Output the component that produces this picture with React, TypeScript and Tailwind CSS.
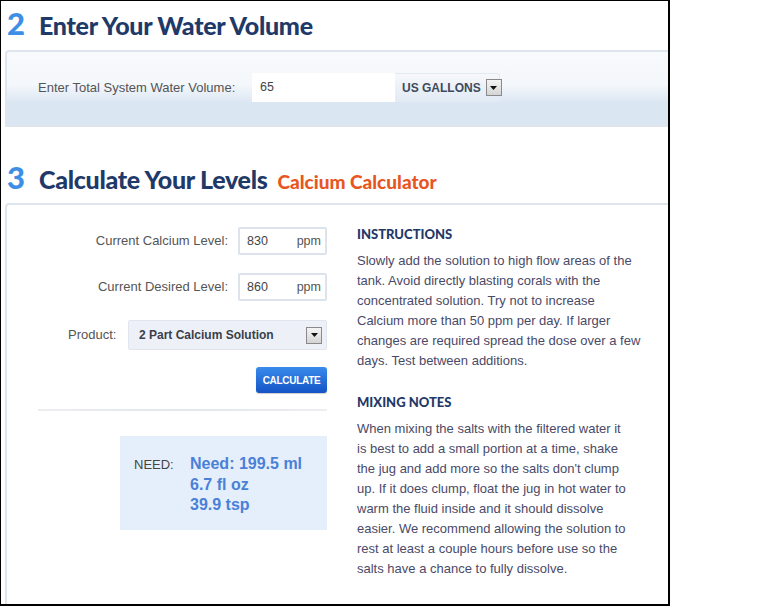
import React from "react";

const instructions = [
  "Slowly add the solution to high flow areas of the",
  "tank. Avoid directly blasting corals with the",
  "concentrated solution. Try not to increase",
  "Calcium more than 50 ppm per day. If larger",
  "changes are required spread the dose over a few",
  "days. Test between additions.",
];

const mixing = [
  "When mixing the salts with the filtered water it",
  "is best to add a small portion at a time, shake",
  "the jug and add more so the salts don't clump",
  "up. If it does clump, float the jug in hot water to",
  "warm the fluid inside and it should dissolve",
  "easier. We recommend allowing the solution to",
  "rest at least a couple hours before use so the",
  "salts have a chance to fully dissolve.",
];

const DropBtn = () => (
  <span className="flex h-[17px] w-[16px] shrink-0 items-center justify-center border border-[#8a8a8a] bg-gradient-to-b from-[#f4f4f4] to-[#d4d4d4]">
    <svg width="7" height="4" viewBox="0 0 7 4">
      <path d="M0 0h7L3.5 4z" fill="#111" />
    </svg>
  </span>
);

const SectionTitle = ({ num, title, extra }: { num: string; title: string; extra?: string }) => (
  <div className="flex items-baseline pl-[6px] font-['Lato',sans-serif] font-black">
    <span className="w-[32px] text-[31px] leading-none text-[#3d8fe6]">{num}</span>
    <span className="text-[25px] leading-none tracking-[-0.3px] text-[#1f3968]">{title}</span>
    {extra && <span className="ml-[10px] text-[19px] leading-none text-[#e8561f]">{extra}</span>}
  </div>
);

const PpmInput = ({ value }: { value: string }) => (
  <div className="flex h-[28px] w-[89px] items-center justify-between rounded-[2px] border-2 border-[#dce3ec] bg-white pl-[7px] pr-[4px] text-[12.5px] text-[#444]">
    <span>{value}</span>
    <span className="text-[#555]">ppm</span>
  </div>
);

export default function App() {
  return (
    <div className="h-[606px] w-[670px] overflow-hidden border-b-2 border-l border-r-2 border-t border-black bg-white font-['Liberation_Sans',Arial,sans-serif]">
      <div className="pt-[7px]">
        <SectionTitle num="2" title="Enter Your Water Volume" />
      </div>

      <div className="ml-[4px] mt-[11px] h-[77px] rounded-tl-[4px] border-y-2 border-l-2 border-[#dfe5ed] bg-[linear-gradient(to_bottom,#f8fafd_0%,#f4f7fb_45%,#dbe6f3_70%,#dbe6f3_100%)] pl-[31px] pt-[21px]">
        <div className="flex items-center">
          <span className="w-[202px] whitespace-nowrap text-[13px] text-[#555]">Enter Total System Water Volume:</span>
          <div className="ml-[12px] flex h-[29px]">
            <div className="flex w-[143px] items-center bg-white pl-[8px] text-[12.5px] text-[#444]">65</div>
            <div className="flex w-[105px] items-center gap-[5px] rounded-r-[3px] border border-l-0 border-[#e4eaf2] bg-gradient-to-b from-[#f6f8fb] to-[#e2eaf4] pl-[7px]">
              <span className="whitespace-nowrap text-[12px] font-bold text-[#3e4a5e]">US GALLONS</span>
              <DropBtn />
            </div>
          </div>
        </div>
      </div>

      <div className="pt-[35px]">
        <SectionTitle num="3" title="Calculate Your Levels" extra="Calcium Calculator" />
      </div>

      <div className="ml-[4px] mt-[10px] flex h-[420px] rounded-tl-[4px] border-l-2 border-t-2 border-[#dfe5ed] pl-[31px]">
        <div className="w-[289px] pt-[22px]">
          <div className="flex items-center">
            <span className="w-[190px] text-right text-[13px] text-[#555]">Current Calcium Level:</span>
            <span className="ml-[10px]">
              <PpmInput value="830" />
            </span>
          </div>
          <div className="mt-[18px] flex items-center">
            <span className="w-[190px] text-right text-[13px] text-[#555]">Current Desired Level:</span>
            <span className="ml-[10px]">
              <PpmInput value="860" />
            </span>
          </div>
          <div className="mt-[19px] flex items-center pl-[30px]">
            <span className="w-[60px] text-[13px] text-[#555]">Product:</span>
            <div className="flex h-[30px] w-[199px] items-center justify-between rounded-[2px] border border-[#dfe6ef] bg-[#edf1f7] pl-[10px] pr-[4px]">
              <span className="text-[12px] font-bold text-[#3a3f4a]">2 Part Calcium Solution</span>
              <DropBtn />
            </div>
          </div>
          <div className="mt-[17px] flex justify-end">
            <button className="h-[26px] w-[71px] rounded-[3px] bg-gradient-to-b from-[#3a8bec] to-[#1553c6] text-[10px] font-bold tracking-[-0.3px] text-white shadow-[0_1px_1px_rgba(0,0,0,0.2)]">
              CALCULATE
            </button>
          </div>
          <div className="mt-[16px] h-[2px] bg-gradient-to-r from-[#eceef1] via-[#e3e6ea] to-[#eceef1]" />
          <div className="ml-[82px] mt-[25px] flex h-[94px] w-[207px] bg-[#e5effb] pl-[14px] pt-[18px]">
            <span className="w-[56px] pt-[1px] text-[13px] text-[#444]">NEED:</span>
            <div className="text-[16px] font-bold leading-[20.5px] text-[#4a80d8]">
              <div>Need: 199.5 ml</div>
              <div>6.7 fl oz</div>
              <div>39.9 tsp</div>
            </div>
          </div>
        </div>

        <div className="ml-[30px] w-[300px] pt-[21px] text-[13px] leading-[20px] text-[#4a4a68]">
          <div className="font-['Lato',sans-serif] text-[13px] font-black leading-[16px] text-[#1f3968]">INSTRUCTIONS</div>
          <div className="mt-[9px]">
            {instructions.map((l) => (
              <div key={l} className="whitespace-nowrap">{l}</div>
            ))}
          </div>
          <div className="mt-[23px] font-['Lato',sans-serif] text-[13px] font-black leading-[16px] text-[#1f3968]">MIXING NOTES</div>
          <div className="mt-[9px]">
            {mixing.map((l) => (
              <div key={l} className="whitespace-nowrap">{l}</div>
            ))}
          </div>
        </div>
      </div>
    </div>
  );
}
